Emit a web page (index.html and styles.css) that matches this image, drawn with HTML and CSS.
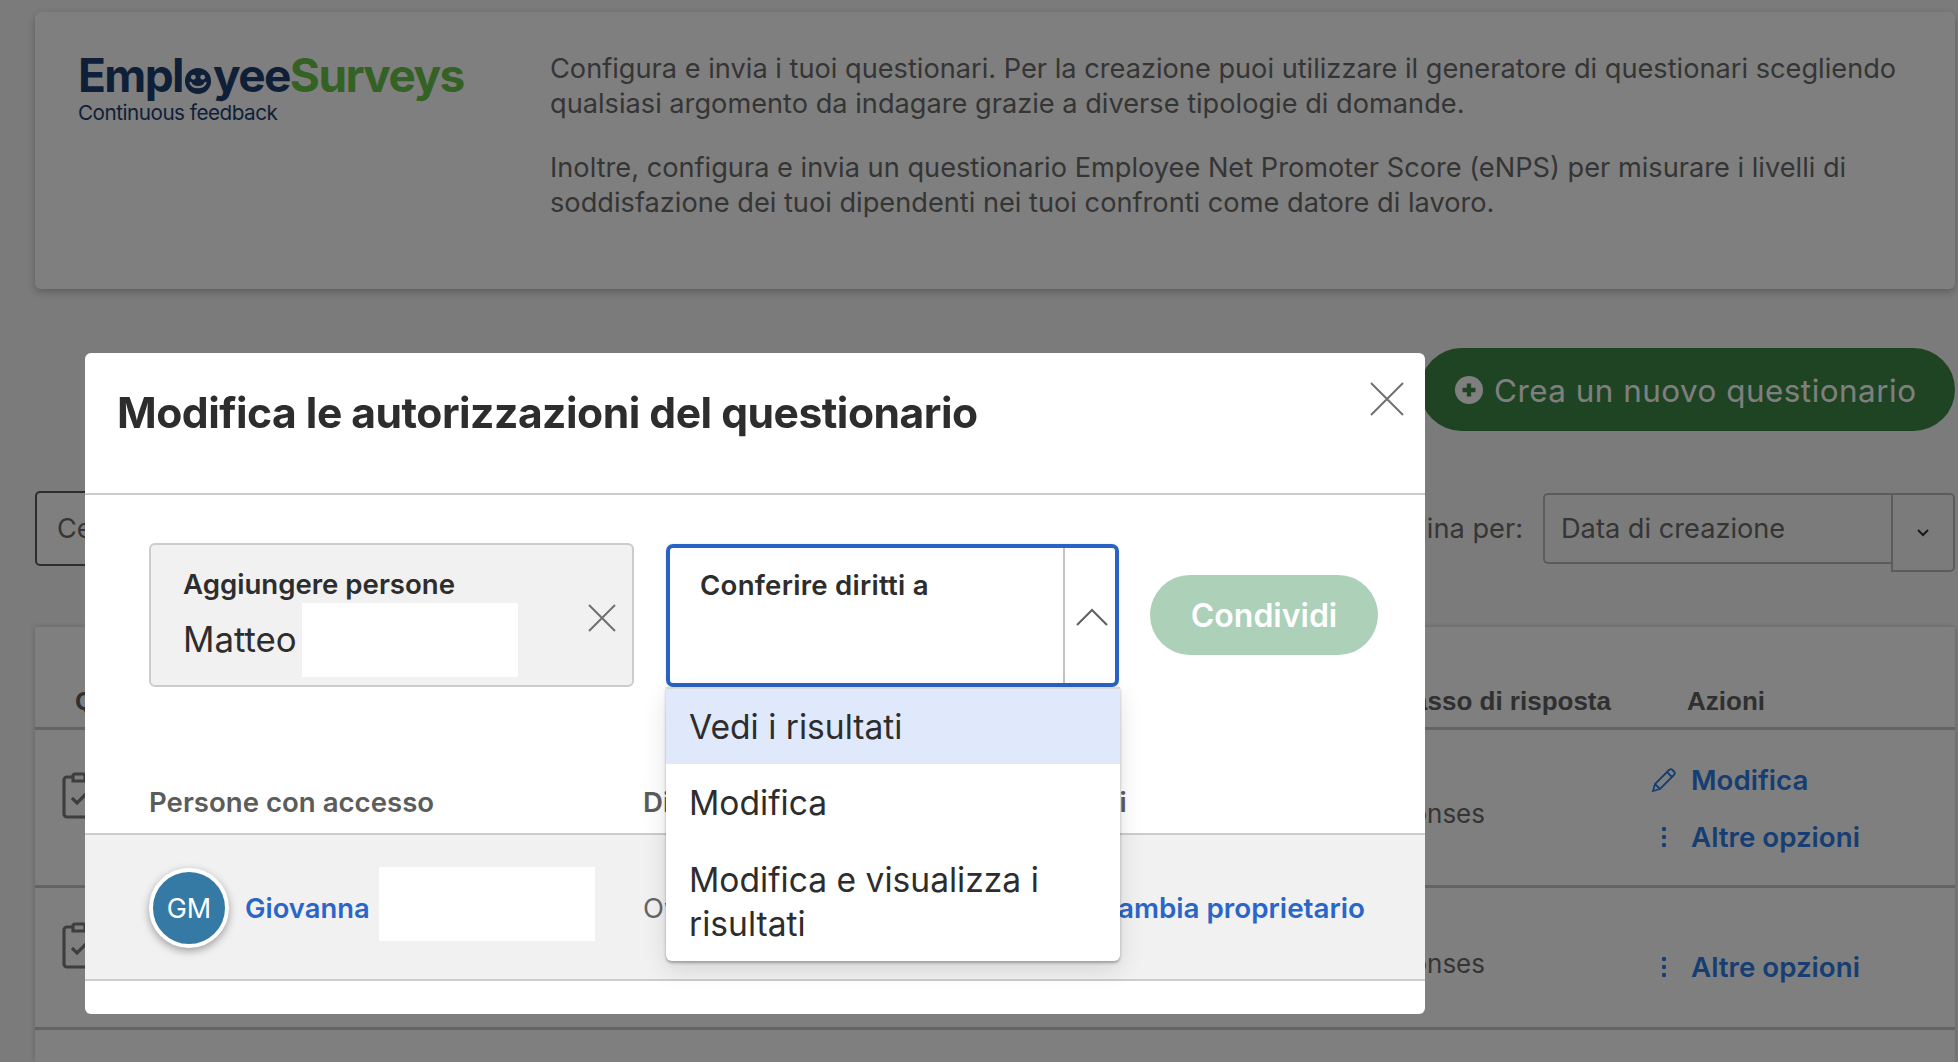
FILE: index.html
```html
<!DOCTYPE html>
<html lang="it">
<head>
<meta charset="utf-8">
<title>Employee Surveys</title>
<link rel="stylesheet" href="styles.css">
</head>
<body>
<div class="page">
  <section class="intro">
    <div class="logo">
      <div class="logo-mark"><span class="logo-dark">Empl<svg class="smile" viewBox="0 0 30 30"><circle cx="15" cy="15" r="14" fill="#1e3e70"/><circle cx="10" cy="11" r="2.6" fill="#fff"/><circle cx="20" cy="11" r="2.6" fill="#fff"/><path d="M7 17c2 6 14 6 16 0" fill="none" stroke="#fff" stroke-width="2.4" stroke-linecap="round"/></svg>yee</span><span class="logo-green">Surveys</span></div>
      <div class="logo-sub">Continuous feedback</div>
    </div>
    <div class="intro-text">
      <p>Configura e invia i tuoi questionari. Per la creazione puoi utilizzare il generatore di questionari scegliendo qualsiasi argomento da indagare grazie a diverse tipologie di domande.</p>
      <p>Inoltre, configura e invia un questionario Employee Net Promoter Score (eNPS) per misurare i livelli di soddisfazione dei tuoi dipendenti nei tuoi confronti come datore di lavoro.</p>
    </div>
  </section>

  <div class="actions-row">
    <button class="create-btn">
      <svg class="plus" viewBox="0 0 26 26"><circle cx="13" cy="13" r="13" fill="#fff"/><path d="M13 7v12M7 13h12" stroke="#3c8846" stroke-width="4"/></svg>
      Crea un nuovo questionario
    </button>
  </div>

  <div class="toolbar">
    <div class="search">Cerca</div>
    <div class="sort">
      <span class="sort-label">Ordina per:</span>
      <div class="sort-select">Data di creazione</div>
      <div class="sort-caret"><svg viewBox="0 0 14 10" class="caret-icon"><path d="M2 2l5 5 5-5" fill="none" stroke="#333" stroke-width="2"/></svg></div>
    </div>
  </div>

  <section class="table">
    <div class="thead">
      <span class="th-name">Questionario</span>
      <span class="th-rate">Tasso di risposta</span>
      <span class="th-actions">Azioni</span>
    </div>
    <div class="trow trow-a">
      <svg class="clip" viewBox="0 0 34 48"><path d="M10 6H5a3 3 0 0 0-3 3v34a3 3 0 0 0 3 3h24a3 3 0 0 0 3-3V9a3 3 0 0 0-3-3h-5M11 10V5a2 2 0 0 1 2-2h8a2 2 0 0 1 2 2v5zM10 27l5 5 9-9" fill="none" stroke="#7c7c7c" stroke-width="3.2"/></svg>
      <span class="responses">0 responses</span>
      <div class="row-actions">
        <a class="act"><svg class="act-icon" viewBox="0 0 26 26"><path d="M2 24l2-7L18 3a2.5 2.5 0 0 1 3.500 0l1.500 1.500a2.500 2.500 0 0 1 0 3.500L9 22zM4 17l5 5M16 5l5 5" fill="none" stroke="#2e7ce6" stroke-width="1.800"/></svg>Modifica</a>
        <a class="act"><svg class="act-icon" viewBox="0 0 26 26"><circle cx="13" cy="5" r="2.200" fill="#2e7ce6"/><circle cx="13" cy="13" r="2.200" fill="#2e7ce6"/><circle cx="13" cy="21" r="2.200" fill="#2e7ce6"/></svg>Altre opzioni</a>
      </div>
    </div>
    <div class="trow trow-b">
      <svg class="clip" viewBox="0 0 34 48"><path d="M10 6H5a3 3 0 0 0-3 3v34a3 3 0 0 0 3 3h24a3 3 0 0 0 3-3V9a3 3 0 0 0-3-3h-5M11 10V5a2 2 0 0 1 2-2h8a2 2 0 0 1 2 2v5zM10 27l5 5 9-9" fill="none" stroke="#7c7c7c" stroke-width="3.2"/></svg>
      <span class="responses">0 responses</span>
      <div class="row-actions">
        <a class="act"><svg class="act-icon" viewBox="0 0 26 26"><circle cx="13" cy="5" r="2.200" fill="#2e7ce6"/><circle cx="13" cy="13" r="2.200" fill="#2e7ce6"/><circle cx="13" cy="21" r="2.200" fill="#2e7ce6"/></svg>Altre opzioni</a>
      </div>
    </div>
  </section>
</div>

<div class="overlay"></div>

<div class="modal">
  <header class="modal-head">
    <h1>Modifica le autorizzazioni del questionario</h1>
    <svg class="modal-close" viewBox="0 0 34 34"><path d="M1 1l32 32M33 1L1 33" stroke="#707070" stroke-width="2" fill="none"/></svg>
  </header>
  <div class="form-row">
    <div class="people-field">
      <div class="field-label">Aggiungere persone</div>
      <div class="people-value"><span class="people-name">Matteo</span><i class="redact redact-name"></i></div>
      <svg class="field-clear" viewBox="0 0 28 28"><path d="M1 1l26 26M27 1L1 27" stroke="#707070" stroke-width="2" fill="none"/></svg>
    </div>
    <div class="rights">
      <div class="rights-main"><div class="field-label rights-label">Conferire diritti a</div></div>
      <div class="rights-toggle"><svg viewBox="0 0 32 18" class="toggle-icon"><path d="M1 17L16 2l15 15" fill="none" stroke="#606060" stroke-width="2"/></svg></div>
      <ul class="dropdown">
        <li class="option option-active">Vedi i risultati</li>
        <li class="option">Modifica</li>
        <li class="option">Modifica e visualizza i risultati</li>
      </ul>
    </div>
    <button class="share">Condividi</button>
  </div>
  <div class="access-head">
    <span class="access-col1">Persone con accesso</span>
    <span class="access-col2">Diritti</span>
    <span class="access-col3">Azioni</span>
  </div>
  <div class="access-row">
    <div class="person">
      <div class="avatar">GM</div>
      <a class="link">Giovanna</a>
      <i class="redact redact-person"></i>
    </div>
    <span class="role">Owner</span>
    <a class="link change">Cambia proprietario</a>
  </div>
</div>
</body>
</html>
```
FILE: styles.css
```css
* { box-sizing: border-box; }
html, body { margin: 0; height: 100%; overflow: hidden; }
body {
  background: #f7f7f7;
  font-family: Inter, "Liberation Sans", sans-serif;
  color: #333;
  height: 1062px;
}
.page { padding: 12px 3px 0 35px; }

.intro {
  height: 277px;
  background: #fff;
  border-radius: 6px;
  box-shadow: 0 3px 8px rgba(0, 0, 0, .25);
  display: flex;
  padding: 40px 20px 0 43px;
}
.logo { width: 472px; flex: none; }
.logo-mark { font-size: 46px; font-weight: 700; letter-spacing: -1.6px; line-height: 46px; white-space: nowrap; }
.logo-dark { color: #1e3e70; }
.logo-green { color: #68c448; }
.smile { width: 28px; height: 28px; margin: 0 1px -3px; }
.logo-sub { color: #1e3e70; font-size: 20.7px; letter-spacing: -.5px; line-height: 24px; margin-top: 3px; }
.intro-text { font-size: 27.2px; line-height: 35px; color: #6b6b6b; margin-top: -1px; }
.intro-text p { margin: 0 0 29px; }

.actions-row { display: flex; justify-content: flex-end; margin-top: 59px; }
.create-btn {
  height: 83px;
  width: 535px;
  border: 0;
  border-radius: 42px;
  background: #3c8846;
  color: #fff;
  font: 400 31.4px Inter, sans-serif;
  letter-spacing: .5px;
  display: flex;
  align-items: center;
  gap: 11px;
  padding: 2px 0 0 35px;
}
.plus { width: 28px; height: 28px; margin-top: -2px; }

.toolbar { display: flex; justify-content: space-between; align-items: flex-start; margin-top: 60px; height: 136px; }
.search {
  width: 500px;
  height: 75px;
  border: 2px solid #5a5a5a;
  border-radius: 5px;
  background: #fff;
  font-size: 27px;
  line-height: 71px;
  padding-left: 20px;
  color: #6b6b6b;
}
.sort { display: flex; align-items: flex-start; padding-top: 2px; font-size: 27.2px; color: #6b6b6b; }
.sort-label { line-height: 71px; margin-right: 20px; }
.sort-select {
  width: 348px;
  height: 71px;
  border: 2px solid #b8b8b8;
  border-right: 0;
  border-radius: 5px 0 0 5px;
  line-height: 67px;
  padding-left: 16px;
}
.sort-caret {
  width: 64px;
  height: 79px;
  border: 2px solid #b8b8b8;
  border-radius: 0 5px 5px 0;
  display: flex;
  align-items: center;
  justify-content: center;
}
.caret-icon { width: 14px; height: 10px; }

.table { background: #fff; box-shadow: 0 0 6px rgba(0, 0, 0, .2); height: 435px; }
.thead {
  height: 103px;
  border-bottom: 3px solid #c9c9c9;
  display: flex;
  align-items: center;
  font: 700 26px "Liberation Sans", sans-serif;
  color: #606060;
  padding: 48px 0 0 40px;
}
.th-name { flex: 1; }
.th-rate { width: 290px; margin-right: 76px; text-align: right; white-space: nowrap; }
.th-actions { width: 268px; }
.trow { display: flex; border-bottom: 3px solid #c9c9c9; align-items: center; padding-left: 27px; }
.trow-a { height: 158px; }
.trow-b { height: 142px; }
.clip { width: 34px; height: 48px; flex: none; margin: 0 auto 26px 0; }
.responses { font-size: 26px; color: #6b6b6b; white-space: nowrap; margin-right: 166px; padding-top: 12px; }
.row-actions { width: 304px; display: flex; flex-direction: column; gap: 25px; padding-top: 1px; }
.trow-b .row-actions { padding-top: 18px; }
.act { display: flex; align-items: center; font-weight: 600; font-size: 27.7px; line-height: 32px; color: #2e7ce6; white-space: nowrap; }
.act-icon { width: 26px; height: 26px; margin-right: 14px; flex: none; }

.overlay { position: fixed; inset: 0; background: rgba(0, 0, 0, .5); }

.modal {
  position: absolute;
  left: 85px;
  top: 353px;
  width: 1340px;
  height: 661px;
  background: #fff;
  border-radius: 6px;
}
.modal-head {
  height: 142px;
  border-bottom: 2px solid #ccc;
  padding: 35px 0 0 32px;
  position: relative;
}
.modal-head h1 { margin: 0; font-size: 42.6px; line-height: 50px; font-weight: 700; color: #2d2d2d; letter-spacing: -.5px; white-space: nowrap; }
.modal-close { position: absolute; right: 21px; top: 29px; width: 34px; height: 34px; }

.form-row { display: flex; align-items: center; gap: 31px; padding: 48px 0 0 64px; }
.people-field {
  position: relative;
  width: 485px;
  height: 144px;
  background: #f1f1f1;
  border: 2px solid #ccc;
  border-radius: 6px;
  padding: 23px 0 0 32px;
}
.field-label { font-size: 27.6px; line-height: 32px; font-weight: 600; color: #2d2d2d; white-space: nowrap; }
.rights-label { letter-spacing: .26px; }
.people-value { display: flex; align-items: center; margin-top: 3px; font-size: 34.8px; color: #2d2d2d; gap: 5px; }
.people-name { margin-top: -3px; }
.redact { display: block; background: #fff; }
.redact-name { width: 216px; height: 74px; }
.field-clear { position: absolute; right: 16px; top: 59px; width: 28px; height: 28px; }

.rights {
  position: relative;
  width: 453px;
  height: 143px;
  margin-left: 1px;
  border: 4px solid #2a62c4;
  border-radius: 7px;
  display: flex;
  box-shadow: 0 0 3px rgba(0, 0, 0, .1);
}
.rights-main { flex: 1; padding: 21px 0 0 30px; }
.rights-toggle { width: 52px; border-left: 2px solid #c4c4c4; display: flex; align-items: center; justify-content: center; padding: 4px 0 0 4px; }
.toggle-icon { width: 32px; height: 18px; }
.dropdown {
  position: absolute;
  left: -4px;
  right: -5px;
  top: calc(100% + 4px);
  margin: 0;
  padding: 0;
  list-style: none;
  background: #fff;
  border-top: 2px solid #d8d8d8;
  border-radius: 0 0 6px 6px;
  box-shadow: 0 2px 3px rgba(0, 0, 0, .3), 0 8px 24px rgba(0, 0, 0, .12);
  z-index: 2;
  font-size: 33.6px;
  line-height: 44px;
  color: #2d2d2d;
}
.option { padding: 16px 50px 15px 23px; }
.option-active { background: #e0e9fb; }
.option:nth-child(2) { padding-top: 17px; padding-bottom: 18px; }
.option:last-child { padding-top: 15px; padding-bottom: 15px; }
.share {
  width: 228px;
  height: 80px;
  border: 0;
  border-radius: 40px;
  background: #add0b9;
  color: #fff;
  font: 600 32px Inter, sans-serif;
}

.access-head {
  height: 102px;
  margin-top: 46px;
  display: flex;
  align-items: center;
  padding: 38px 0 0 64px;
  border-bottom: 2px solid #ccc;
  font-size: 27.6px;
  font-weight: 600;
  color: #5c5c5c;
}
.access-col1 { width: 494px; }
.access-col2 { width: 400px; }
.access-row {
  height: 146px;
  background: #f1f1f1;
  border-bottom: 2px solid #ccc;
  display: flex;
  align-items: center;
  padding: 2px 60px 0 64px;
  font-size: 27.4px;
}
.person { width: 494px; display: flex; align-items: center; flex: none; }
.avatar {
  width: 80px;
  height: 80px;
  border-radius: 50%;
  border: 4px solid #fff;
  background: #357aa5;
  color: #fff;
  font-size: 27px;
  display: flex;
  align-items: center;
  justify-content: center;
  box-shadow: 0 3px 8px rgba(0, 0, 0, .35);
  flex: none;
}
.link { color: #2a66c8; font-weight: 600; white-space: nowrap; }
.person .link { margin-left: 16px; }
.redact-person { width: 216px; height: 74px; margin: -8px 0 0 9px; }
.role { color: #666; }
.change { margin-left: auto; font-size: 27.8px; }
```
